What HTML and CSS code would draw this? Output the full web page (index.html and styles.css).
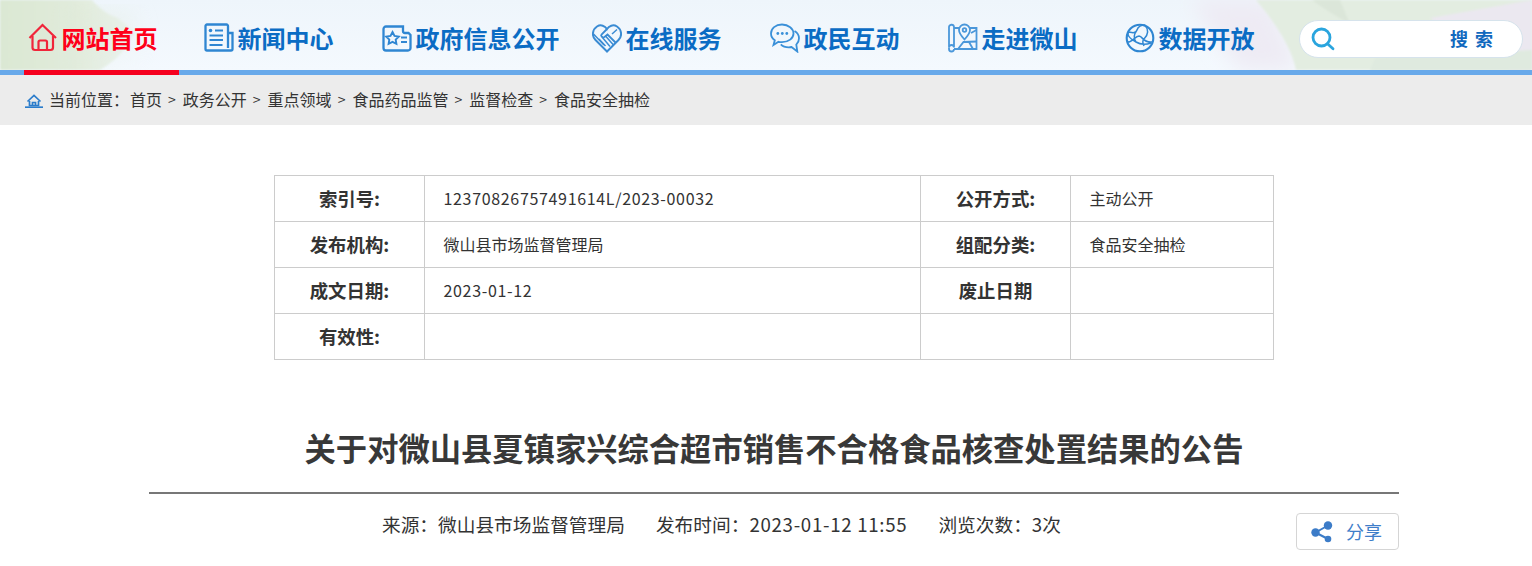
FILE: index.html
```html
<!DOCTYPE html>
<html lang="zh-CN">
<head>
<meta charset="utf-8">
<title>关于对微山县夏镇家兴综合超市销售不合格食品核查处置结果的公告</title>
<link rel="stylesheet" href="styles.css">
</head>
<body>
<header class="header">
  <svg class="header-bg" viewBox="0 0 1532 70" preserveAspectRatio="none" aria-hidden="true">
    <defs>
      <filter id="soft"><feGaussianBlur stdDeviation="1"/></filter>
      <filter id="softer"><feGaussianBlur stdDeviation="10"/></filter>
      <linearGradient id="hill" x1="0" x2="1" y1="0" y2="0"><stop offset="0" stop-color="#dbe8d3"/><stop offset=".55" stop-color="#e1ebdb"/><stop offset="1" stop-color="#ebf3ef"/></linearGradient>
      <linearGradient id="hillfade" x1="0" x2="1" y1="0" y2="1"><stop offset="0" stop-color="#dbe8d3"/><stop offset="1" stop-color="#e8f1ea" stop-opacity="0"/></linearGradient>
    </defs>
    <path d="M0 0H92Q104 14 118 18L135 32Q125 55 100 70H0Z" fill="url(#hill)" filter="url(#soft)"/>
    <path d="M70 10H135L150 70H60Z" fill="url(#hillfade)" filter="url(#softer)" opacity=".5"/>
    <path d="M1190 0H1270L1300 70H1240Z" fill="#eeebf4" filter="url(#softer)"/>
    <path d="M1256 0H1532V70H1296Q1290 40 1256 0Z" fill="#e3ede1" filter="url(#soft)"/>
    <path d="M1312 0H1340L1350 24Q1325 10 1312 0Z" fill="#dbe6d9" filter="url(#soft)"/>
    <path d="M1430 18 1532 0V70H1510Q1470 45 1430 18Z" fill="#ebe8f0" filter="url(#soft)"/>
    <path d="M1375 58 1532 50V70H1370Z" fill="#dfeadf" filter="url(#soft)"/>
  </svg>
  <nav class="nav">
    <a class="nav-item active" href="#">
      <svg class="nav-icon" viewBox="0 0 30 30" fill="none" stroke="#f0263a" stroke-width="2.200"><path d="M1.500 15 14.500 2 28 15"/><path d="M4.500 13v11.500a2.500 2.500 0 0 0 2.500 2.500h15.500a2.500 2.500 0 0 0 2.500-2.500V13"/><path d="M10.500 27v-8a1.500 1.500 0 0 1 1.500-1.500h5.500a1.500 1.500 0 0 1 1.500 1.500v8"/></svg>
      <span>网站首页</span>
    </a>
    <a class="nav-item" href="#">
      <svg class="nav-icon" viewBox="0 0 30 30" fill="none" stroke="#2f86d2" stroke-width="2.300"><path d="M24 25V3a1.500 1.500 0 0 0-1.500-1.500H3A1.500 1.500 0 0 0 1.500 3v23A1.500 1.500 0 0 0 3 27.500h24a1.500 1.500 0 0 0 1.500-1.500V10H24"/><circle cx="6.500" cy="7.500" r="1.800" fill="#2f86d2" stroke="none"/><path d="M11 7.500h8M5.500 12.500h13.500M5.500 17h13.500M5.500 22h13" stroke-width="1.800"/></svg>
      <span>新闻中心</span>
    </a>
    <a class="nav-item" href="#">
      <svg class="nav-icon" viewBox="0 0 30 30" fill="none" stroke="#2f86d2" stroke-width="2.300"><path d="M21 3.500H4A2.500 2.500 0 0 0 1.500 6v19A2.500 2.500 0 0 0 4 27.500h22a2.500 2.500 0 0 0 2.500-2.500V12l-2-2h-3.500a2 2 0 0 1-2-2Z"/><path d="m10.500 9 2 4 4.300.6-3.100 3 .7 4.300-3.900-2-3.900 2 .7-4.300-3.100-3 4.300-.6Z" stroke-width="1.900"/><path d="M19 14.500h6M19 19h6" stroke-width="1.800"/></svg>
      <span>政府信息公开</span>
    </a>
    <a class="nav-item" href="#">
      <svg class="nav-icon" viewBox="0 0 30 30" fill="none" stroke="#3a8bd3" stroke-width="2"><path d="M15 28.500 3.500 17C-.5 13 .3 6.500 5 3.500 9 1 13 3 15 6c2-3 6-5 10-2.500 4.700 3 5.500 9.500 1.500 13.500Z"/><path d="M15 6 9.500 11.500c-1.200 1.500 1 3.500 3 2.500l3-2.500 8.500 8.500" stroke-width="1.800"/><path d="M1.500 11 12 22M7 16l6.500 7M10 14l8 9.500M13.500 13l8 9M25 6.500l-5 4.500" stroke-width="1.500"/></svg>
      <span>在线服务</span>
    </a>
    <a class="nav-item" href="#">
      <svg class="nav-icon" viewBox="0 0 30 30" fill="none" stroke="#3a90d8" stroke-width="1.800"><path d="M12 1.500C5.500 1.500 1 5.500 1 10.500c0 2.800 1.500 5.200 3.800 6.800L3.500 22l5-3.200c1.100.3 2.300.4 3.500.4 6.500 0 11.500-3.900 11.500-8.700S18.500 1.500 12 1.500Z"/><path d="M24.500 8c2.800 1.700 4.500 4.300 4.500 7.200 0 2.800-1 4.800-2.700 6.400l1 6.900-5.800-4.500c-1 .2-1.700.3-2.700.3-3.500 0-6.100-1-8-3"/><circle cx="7.800" cy="10.500" r="1.400" fill="#3a90d8" stroke="none"/><circle cx="12.300" cy="10.500" r="1.400" fill="#3a90d8" stroke="none"/><circle cx="16.800" cy="10.500" r="1.400" fill="#3a90d8" stroke="none"/></svg>
      <span>政民互动</span>
    </a>
    <a class="nav-item" href="#">
      <svg class="nav-icon" viewBox="0 0 30 30" fill="none" stroke="#4a97da" stroke-width="1.800"><path d="M6 5H28.500V26H6"/><path d="M1 4.500A2.500 2.500 0 0 1 6 4v20.500a2.500 2.500 0 0 0-5 0Z"/><path d="M1 24.500V26c0 1.500 1.200 2.500 2.500 2.500S6 27.500 6 26"/><path d="M16.500 1.500a5.500 5.500 0 0 0-5.500 5.500c0 3.500 5.500 9.500 5.500 9.500S22 10.500 22 7a5.500 5.500 0 0 0-5.500-5.500Z" fill="#f2f8fd"/><circle cx="16.500" cy="7" r="1.800"/><path d="M10 26l5.500-7 13-.5M23 10l5.500-3M21 19l4 7"/></svg>
      <span>走进微山</span>
    </a>
    <a class="nav-item" href="#">
      <svg class="nav-icon" viewBox="0 0 30 30" fill="none" stroke="#2f86d2" stroke-width="1.500"><circle cx="15" cy="15" r="13.300" stroke-width="2.100"/><path d="M3 9c4 .5 7 2 9-2 1-3 4-5 8-5M2 19c5 1 8-6 12-6 4 .5 4 7 13 6M3 9c-1 5 4 8 8 10 4 2.500 9 3 15 1M12 7c-3 4-4 8-1 12M20 2c4 5 3 10-1 14-1 1-2 3 0 7"/></svg>
      <span>数据开放</span>
    </a>
    <form class="search">
      <svg class="search-icon" viewBox="0 0 24 24" fill="none" stroke="#2aa5de" stroke-width="2.800"><circle cx="10.500" cy="10.500" r="8.500"/><path d="m16.500 16.800 5.500 5" stroke-linecap="round"/></svg>
      <span class="search-label">搜 索</span>
    </form>
  </nav>
</header>

<div class="crumbs">
  <svg class="crumb-home" viewBox="0 0 18 14" fill="none" stroke="#2a7ccb" stroke-width="1.700"><path d="M2.500 7.500 9 1.500l6.500 6"/><path d="M4.500 7v4.500h9V7M7.500 11.500V8.500h3v3"/><path d="M0 13.200h18"/></svg>
  <span class="crumb-label">当前位置&#xFF1A;</span>
  <a href="#">首页</a><i>&gt;</i><a href="#">政务公开</a><i>&gt;</i><a href="#">重点领域</a><i>&gt;</i><a href="#">食品药品监管</a><i>&gt;</i><a href="#">监督检查</a><i>&gt;</i><a href="#">食品安全抽检</a>
</div>

<main class="main">
  <table class="info">
    <colgroup><col class="c1"><col class="c2"><col class="c3"><col class="c4"></colgroup>
    <tr><th>索引号:</th><td class="num">12370826757491614L/2023-00032</td><th>公开方式:</th><td>主动公开</td></tr>
    <tr><th>发布机构:</th><td>微山县市场监督管理局</td><th>组配分类:</th><td>食品安全抽检</td></tr>
    <tr><th>成文日期:</th><td class="num">2023-01-12</td><th>废止日期</th><td></td></tr>
    <tr><th>有效性:</th><td></td><td></td><td></td></tr>
  </table>
  <h1 class="title">关于对微山县夏镇家兴综合超市销售不合格食品核查处置结果的公告</h1>
  <div class="meta">
    <div class="meta-text">
      <span>来源&#xFF1A;微山县市场监督管理局</span>
      <span>发布时间&#xFF1A;<span class="meta-num">2023-01-12 11:55</span></span>
      <span>浏览次数&#xFF1A;3次</span>
    </div>
    <a class="share" href="#">
      <svg class="share-icon" viewBox="0 0 22 22" fill="#3c7cc8"><circle cx="17" cy="4.500" r="4.200"/><circle cx="4.500" cy="11.500" r="4.200"/><circle cx="17" cy="18" r="3.300"/><path d="M4.500 11.500 17 4.500M4.500 11.500 17 18" stroke="#3c7cc8" stroke-width="2"/></svg>
      <span>分享</span>
    </a>
  </div>
</main>
</body>
</html>
```
FILE: styles.css
```css
* { box-sizing: border-box; }
html, body { margin: 0; padding: 0; }
body {
  background: #fff;
  color: #333;
  font-family: "Noto Sans CJK SC", "Liberation Sans", sans-serif;
  overflow: hidden;
}
a { color: inherit; text-decoration: none; }

.header {
  position: relative;
  height: 75px;
  border-bottom: 5px solid #68a9ea;
  background: linear-gradient(180deg, #eef5fb 0%, #f4f9fe 100%);
}
.header-bg { position: absolute; inset: 0; width: 100%; height: 70px; }
.nav {
  position: relative;
  display: grid;
  grid-template-columns: 176px 178px 210px 178px 178px 177px 175px 1fr;
  height: 70px;
  padding-left: 24px;
}
.nav-item {
  position: relative;
  display: flex;
  align-items: center;
  gap: 3.400px;
  padding-left: 4px;
  color: #0b6cc4;
  font-size: 24px;
  font-weight: 700;
  line-height: 1;
  white-space: nowrap;
  padding-top: 6px;
}
.nav-icon { width: 30px; height: 30px; flex: none; }
.active { color: #ff0019; }
.active::after {
  content: "";
  position: absolute;
  left: 0;
  bottom: -5px;
  width: 155px;
  height: 5px;
  background: #f5001e;
}
.search {
  display: flex;
  align-items: center;
  width: 224px;
  height: 38px;
  margin: 20px 0 0 3px;
  padding-left: 11px;
  background: #fff;
  border: 1px solid #d6e3ec;
  border-radius: 19px;
}
.search-icon { width: 24px; height: 24px; flex: none; }
.search-label {
  margin-left: 115px;
  padding-bottom: 2px;
  color: #1169be;
  font-size: 18px;
  font-weight: 700;
  line-height: 1;
  white-space: nowrap;
  word-spacing: 3px;
}

.crumbs {
  display: flex;
  align-items: center;
  height: 50px;
  padding: 0 0 2px 25px;
  background: #ececec;
  color: #333;
  font-size: 16px;
}
.crumb-home { width: 18px; height: 14px; margin-right: 6px; margin-top: 4px; }
.crumb-label { margin-right: 1px; }
.crumbs i { margin: 0 7px 0 6px; font-style: normal; font-size: 14px; }

.main { width: 1250px; margin-left: 149px; padding-top: 50px; }
.info {
  width: 999px;
  margin-left: 125px;
  table-layout: fixed;
  border-collapse: collapse;
  font-size: 16px;
}
.c1, .c3 { width: 150px; }
.c2 { width: 496px; }
.c4 { width: 203px; }
.info th, .info td { height: 46px; padding: 0 0 2px; border: 1px solid #ccc; }
.info th { font-size: 18.400px; font-weight: 700; text-align: center; }
.info td { padding-left: 18.500px; }
.info .num { letter-spacing: .67px; }

.title {
  margin: 65px 0 0;
  padding-bottom: 21px;
  border-bottom: 2px solid #777;
  color: #383838;
  font-size: 31.300px;
  font-weight: 700;
  line-height: 46px;
  text-align: center;
  white-space: nowrap;
}
.meta { display: flex; justify-content: space-between; align-items: flex-start; padding-top: 17px; }
.meta-text {
  display: flex;
  gap: 31px;
  padding-left: 233px;
  font-size: 18.700px;
  line-height: 26px;
  white-space: nowrap;
}
.meta-num { letter-spacing: .7px; }
.share {
  display: flex;
  align-items: center;
  width: 103px;
  height: 37px;
  margin-top: 2px;
  padding-left: 14px;
  padding-bottom: 2px;
  border: 1px solid #d5d5d5;
  border-radius: 4px;
  color: #3f7ec9;
  font-size: 18px;
}
.share-icon { width: 22px; height: 22px; margin-right: 13px; flex: none; margin-top: 2px; }
```
